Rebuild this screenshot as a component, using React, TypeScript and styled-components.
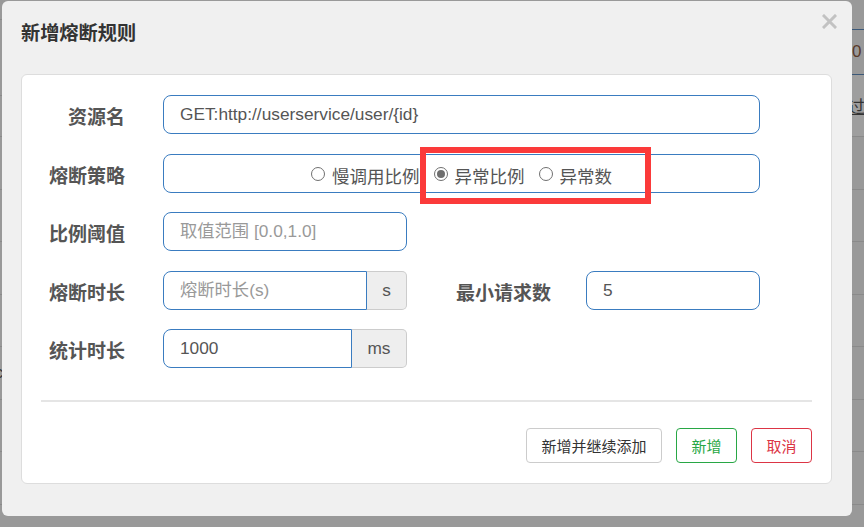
import React from "react";
import styled, { createGlobalStyle } from "styled-components";

const Global = createGlobalStyle`
  html, body { margin: 0; padding: 0; }
  body {
    background: #999999;
    font-family: "Liberation Sans", "Noto Sans CJK SC", sans-serif;
    overflow: hidden;
  }
`;

const FONT = `"Liberation Sans", "Noto Sans CJK SC", sans-serif`;

const Page = styled.div`
  position: relative;
  width: 864px;
  height: 527px;
  overflow: hidden;
  background: #999999;
`;

/* ---------- faux page behind the overlay ---------- */
const BgTop = styled.div`
  display: flex;
  height: 137px;
  border-bottom: 1px solid #8a8a8a;
  box-sizing: border-box;
`;
const BgLeft = styled.div`
  flex: 1;
  display: flex;
  flex-direction: column;
`;
const BgLeftLine = styled.div<{ $h: number }>`
  height: ${(p) => p.$h}px;
  border-bottom: 1px solid #8a8a8a;
`;
const BgRight = styled.div`
  width: 12px;
  display: flex;
  flex-direction: column;
`;
const BgCell = styled.div<{ $h: number; $line?: string; $bg?: string }>`
  height: ${(p) => p.$h}px;
  border-bottom: 1px solid ${(p) => p.$line || "transparent"};
  background: ${(p) => p.$bg || "transparent"};
  display: flex;
  align-items: center;
  font-family: ${FONT};
  font-size: 17px;
  color: #5a3a2a;
  overflow: hidden;
  white-space: nowrap;
`;
const BgLink = styled.span`
  color: #333;
  text-decoration: underline;
  margin-left: -4px;
`;
const BgRow = styled.div`
  height: 52.5px;
  border-bottom: 1px solid #8a8a8a;
  box-sizing: border-box;
  font-family: ${FONT};
  font-size: 16px;
  color: #333;
  display: flex;
  align-items: center;
  margin-left: -5px;
`;

/* ---------- modal ---------- */
const Modal = styled.div`
  position: absolute;
  left: 2px;
  top: 1px;
  width: 850px;
  height: 515px;
  box-sizing: border-box;
  background: #f0f0f0;
  border-radius: 6px;
  padding: 20px 20px 32px 19px;
  display: flex;
  flex-direction: column;
  font-family: ${FONT};
`;

const Title = styled.h4`
  margin: 0 0 27px 0;
  font-size: 19.2px;
  line-height: 26px;
  font-weight: bold;
  color: #333;
`;

const Close = styled.button`
  position: absolute;
  top: 12px;
  right: 15px;
  width: 16px;
  height: 16px;
  padding: 0;
  border: none;
  background: none;
  display: flex;
  align-items: center;
  justify-content: center;
`;

const Panel = styled.div`
  flex: 1;
  background: #fff;
  border: 1px solid #dddddd;
  border-radius: 6px;
  padding: 20px 19px 20px 19px;
  display: flex;
  flex-direction: column;
`;

const Form = styled.div`
  display: flex;
  flex-direction: column;
  gap: 19.5px;
`;

const Row = styled.div`
  display: flex;
  align-items: center;
  height: 39px;
`;

const Label = styled.label<{ $width: number; $gap: number }>`
  width: ${(p) => p.$width}px;
  margin-right: ${(p) => p.$gap}px;
  text-align: right;
  font-size: 19px;
  font-weight: bold;
  color: #555555;
  white-space: nowrap;
  flex-shrink: 0;
  padding-top: 2px;
`;

const Input = styled.input<{ $width: number; $grouped?: boolean }>`
  width: ${(p) => p.$width}px;
  height: 39px;
  box-sizing: border-box;
  border: 1px solid #3a7cc0;
  border-radius: ${(p) => (p.$grouped ? "8px 0 0 8px" : "8px")};
  padding: 0 16px;
  font-family: ${FONT};
  font-size: 17.3px;
  color: #555;
  background: #fff;
  outline: none;
  &::placeholder {
    color: #999;
  }
`;

const Group = styled.div`
  display: flex;
  height: 39px;
`;

const Addon = styled.span<{ $width: number }>`
  width: ${(p) => p.$width}px;
  height: 39px;
  box-sizing: border-box;
  border: 1px solid #cccccc;
  border-left: none;
  border-radius: 0 5px 5px 0;
  background: #eeeeee;
  color: #555;
  font-size: 17.3px;
  display: flex;
  align-items: center;
  justify-content: center;
`;

const RadioBox = styled.div`
  position: relative;
  width: 597px;
  height: 39px;
  box-sizing: border-box;
  border: 1px solid #3a7cc0;
  border-radius: 8px;
  display: flex;
  align-items: center;
  justify-content: center;
  gap: 14px;
  padding-top: 4px;
`;

const RadioOption = styled.label`
  display: flex;
  align-items: center;
  gap: 7px;
  font-size: 17.5px;
  color: #555;
  white-space: nowrap;
`;

const RadioDot = styled.span<{ $checked?: boolean }>`
  position: relative;
  width: 14px;
  height: 14px;
  box-sizing: border-box;
  border-radius: 50%;
  border: 1px solid #707070;
  background: #fff;
  margin-top: -3px;
  &::after {
    content: "";
    display: ${(p) => (p.$checked ? "block" : "none")};
    position: absolute;
    left: 2px;
    top: 2px;
    width: 8px;
    height: 8px;
    border-radius: 50%;
    background: #6e6e6e;
  }
`;

const Highlight = styled.div`
  position: absolute;
  left: 256px;
  top: -8px;
  width: 231px;
  height: 57px;
  box-sizing: border-box;
  border: 6px solid #fb3a3a;
  pointer-events: none;
`;

const Divider = styled.hr`
  margin: 32px 0 0 0;
  border: none;
  height: 2px;
  background: #e5e5e5;
`;

const Footer = styled.div`
  margin-top: 26px;
  display: flex;
  justify-content: flex-end;
  gap: 14px;
`;

const Button = styled.button<{ $tone: "default" | "success" | "danger" }>`
  height: 35px;
  padding: 0 14.5px;
  box-sizing: border-box;
  border-radius: 4px;
  background: #fff;
  font-family: ${FONT};
  font-size: 15px;
  border: 1px solid
    ${(p) =>
      p.$tone === "success" ? "#28a745" : p.$tone === "danger" ? "#dc3545" : "#cccccc"};
  color: ${(p) =>
    p.$tone === "success" ? "#28a745" : p.$tone === "danger" ? "#dc3545" : "#333"};
`;

export default function App() {
  return (
    <Page>
      <Global />
      <BgTop>
        <BgLeft>
          <BgLeftLine $h={19} />
          <BgLeftLine $h={75} />
        </BgLeft>
        <BgRight>
          <BgCell $h={30} $line="#3b5878" />
          <BgCell $h={45} $line="#3b5878">0</BgCell>
          <BgCell $h={61} $bg="#9e9e9e">
            <BgLink>过</BgLink>
          </BgCell>
        </BgRight>
      </BgTop>
      <BgRow />
      <BgRow />
      <BgRow />
      <BgRow />
      <BgRow>c</BgRow>
      <BgRow />
      <BgRow />

      <Modal>
        <Title>新增熔断规则</Title>
        <Close aria-label="close">
          <svg width="15" height="15" viewBox="0 0 15 15">
            <path d="M2 2 L13 13 M13 2 L2 13" stroke="#c2c2c2" strokeWidth="3" strokeLinecap="square" />
          </svg>
        </Close>
        <Panel>
          <Form>
            <Row>
              <Label $width={84} $gap={38}>资源名</Label>
              <Input $width={597} defaultValue="GET:http://userservice/user/{id}" />
            </Row>
            <Row>
              <Label $width={84} $gap={38}>熔断策略</Label>
              <RadioBox>
                <RadioOption>
                  <RadioDot />
                  慢调用比例
                </RadioOption>
                <RadioOption>
                  <RadioDot $checked />
                  异常比例
                </RadioOption>
                <RadioOption>
                  <RadioDot />
                  异常数
                </RadioOption>
                <Highlight />
              </RadioBox>
            </Row>
            <Row>
              <Label $width={84} $gap={38}>比例阈值</Label>
              <Input $width={244} placeholder="取值范围 [0.0,1.0]" />
            </Row>
            <Row>
              <Label $width={84} $gap={38}>熔断时长</Label>
              <Group>
                <Input $width={204} $grouped placeholder="熔断时长(s)" />
                <Addon $width={40}>s</Addon>
              </Group>
              <Label $width={144} $gap={35}>最小请求数</Label>
              <Input $width={174} defaultValue="5" />
            </Row>
            <Row>
              <Label $width={84} $gap={38}>统计时长</Label>
              <Group>
                <Input $width={189} $grouped defaultValue="1000" />
                <Addon $width={55}>ms</Addon>
              </Group>
            </Row>
          </Form>
          <Divider />
          <Footer>
            <Button $tone="default">新增并继续添加</Button>
            <Button $tone="success">新增</Button>
            <Button $tone="danger">取消</Button>
          </Footer>
        </Panel>
      </Modal>
    </Page>
  );
}
